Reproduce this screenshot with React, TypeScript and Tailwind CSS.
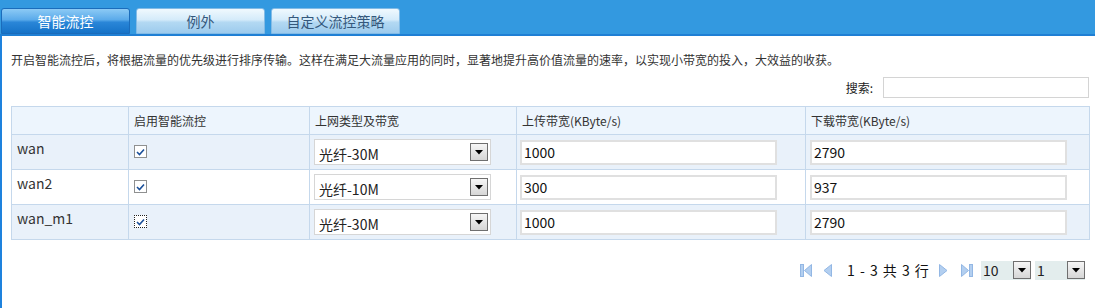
import React from "react";

const FONT = { fontFamily: '"Noto Sans CJK SC", "Noto Sans", sans-serif' };

function Tab({ label, active }: { label: string; active?: boolean }) {
  if (active) {
    return (
      <div className="w-[129px] h-[26px] rounded-t-[3px] border border-[#1b6cbb] bg-[linear-gradient(to_bottom,#8ccaf5_0%,#5aaaea_45%,#2a86d8_55%,#1673c8_100%)] flex items-center justify-center text-[14px] text-white leading-none">
        {label}
      </div>
    );
  }
  return (
    <div className="w-[129px] h-[26px] rounded-t-[3px] border border-[#82bbe6] bg-[linear-gradient(to_bottom,#f0f9fe_0%,#d4ebfa_45%,#b3d9f3_55%,#9dcbed_100%)] flex items-center justify-center text-[14px] text-[#34587c] leading-none">
      {label}
    </div>
  );
}

function Check({ focus }: { focus?: boolean }) {
  return (
    <div
      className={
        "flex w-[13px] h-[13px] items-center justify-center bg-white " +
        (focus ? "border border-dotted border-[#222]" : "border border-[#8f9090]")
      }
    >
      <svg width="9" height="8" viewBox="0 0 9 8" className="block">
        <path d="M1 4 L3.5 6.5 L8 1.5" fill="none" stroke="#1a4f9a" strokeWidth="1.6" />
      </svg>
    </div>
  );
}

function ArrowBtn({ size = 18 }: { size?: number }) {
  return (
    <span
      className="inline-flex items-center justify-center border border-[#6f6f6f] bg-[linear-gradient(to_bottom,#f6f6f6,#d6d6d6)]"
      style={{ width: size, height: size }}
    >
      <svg width="8" height="5" viewBox="0 0 8 5">
        <path d="M0 0 H8 L4 4.5 Z" fill="#000" />
      </svg>
    </span>
  );
}

function Select({ value }: { value: string }) {
  return (
    <div className="w-[177px] h-[26px] border border-[#d6d6d6] bg-white flex items-center justify-between pl-[4px] pr-[2px]">
      <span className="text-[14px] text-[#222] leading-none pt-[3px]">{value}</span>
      <ArrowBtn />
    </div>
  );
}

function TextInput({ value }: { value: string }) {
  return (
    <div className="w-[257px] h-[25px] border-2 border-[#e0e0e0] bg-white flex items-center pl-[2px] text-[14px] text-[#111] leading-none">
      {value}
    </div>
  );
}

function PageIcon({ kind }: { kind: "first" | "prev" | "next" | "last" }) {
  const fill = "#b3cff0";
  const stroke = "#93b7e4";
  if (kind === "first")
    return (
      <svg width="12" height="13" viewBox="0 0 12 13" className="block">
        <rect x="0.5" y="0.5" width="3" height="12" fill={fill} stroke={stroke} />
        <path d="M11.5 0.5 V12.5 L4.5 6.5 Z" fill={fill} stroke={stroke} />
      </svg>
    );
  if (kind === "last")
    return (
      <svg width="12" height="13" viewBox="0 0 12 13" className="block">
        <rect x="8.5" y="0.5" width="3" height="12" fill={fill} stroke={stroke} />
        <path d="M0.5 0.5 V12.5 L7.5 6.5 Z" fill={fill} stroke={stroke} />
      </svg>
    );
  if (kind === "prev")
    return (
      <svg width="9" height="13" viewBox="0 0 9 13" className="block">
        <path d="M8.5 0.5 V12.5 L1 6.5 Z" fill={fill} stroke={stroke} />
      </svg>
    );
  return (
    <svg width="9" height="13" viewBox="0 0 9 13" className="block">
      <path d="M0.5 0.5 V12.5 L8 6.5 Z" fill={fill} stroke={stroke} />
    </svg>
  );
}

function PageSelect({ value }: { value: string }) {
  return (
    <div className="w-[50px] h-[19px] bg-[#e3eded] flex items-center justify-between pl-[2px]">
      <span className="text-[14px] text-[#222] leading-none">{value}</span>
      <ArrowBtn size={18} />
    </div>
  );
}

const rows = [
  { name: "wan", sel: "光纤-30M", up: "1000", down: "2790", shade: true, focus: false },
  { name: "wan2", sel: "光纤-10M", up: "300", down: "937", shade: false, focus: false },
  { name: "wan_m1", sel: "光纤-30M", up: "1000", down: "2790", shade: true, focus: true },
];

export default function App() {
  return (
    <div className="w-[1095px] min-h-[308px] flex flex-col bg-white" style={FONT}>
      <div className="h-[36px] bg-[#3399e0] border-b-2 border-[#1f7fd4] flex items-end gap-[6px] pl-[1px]">
        <Tab label="智能流控" active />
        <Tab label="例外" />
        <Tab label="自定义流控策略" />
      </div>
      <div className="flex-1 border-l-2 border-[#1e82dd] pl-[9px] pr-[4px]">
        <div className="pt-[15px] text-[12px] leading-[18px] text-[#333]">
          开启智能流控后，将根据流量的优先级进行排序传输。这样在满足大流量应用的同时，显著地提升高价值流量的速率，以实现小带宽的投入，大效益的收获。
        </div>
        <div className="mt-[8px] flex items-center justify-end w-[1078px]">
          <span className="text-[12px] text-[#222] mr-[10px] leading-none">搜索:</span>
          <div className="w-[206px] h-[21px] border border-[#d4d4d4] bg-white" />
        </div>
        <table className="mt-[8px] w-[1078px] table-fixed border-collapse border border-[#c5d8ec]">
          <colgroup>
            <col className="w-[117px]" />
            <col className="w-[181px]" />
            <col className="w-[207px]" />
            <col className="w-[289px]" />
            <col className="w-[284px]" />
          </colgroup>
          <thead>
            <tr className="h-[28px] bg-[#edf5fd] text-[12px] text-[#333] text-left">
              <th className="font-normal border border-[#c5d8ec] pl-[5px]"></th>
              <th className="font-normal border border-[#c5d8ec] pl-[5px]">启用智能流控</th>
              <th className="font-normal border border-[#c5d8ec] pl-[5px]">上网类型及带宽</th>
              <th className="font-normal border border-[#c5d8ec] pl-[5px]">上传带宽(KByte/s)</th>
              <th className="font-normal border border-[#c5d8ec] pl-[5px]">下载带宽(KByte/s)</th>
            </tr>
          </thead>
          <tbody>
            {rows.map((r) => (
              <tr key={r.name} className={"h-[35px] " + (r.shade ? "bg-[#e9f1fa]" : "bg-white")}>
                <td className="border border-[#c5d8ec] pl-[5px] align-top pt-[3px] text-[14px] leading-[20px] text-[#333]">
                  {r.name}
                </td>
                <td className="border border-[#c5d8ec] pl-[5px] align-top pt-[10px]">
                  <Check focus={r.focus} />
                </td>
                <td className="border border-[#c5d8ec] pl-[4px] align-middle">
                  <Select value={r.sel} />
                </td>
                <td className="border border-[#c5d8ec] pl-[3px] align-middle">
                  <TextInput value={r.up} />
                </td>
                <td className="border border-[#c5d8ec] pl-[4px] align-middle">
                  <TextInput value={r.down} />
                </td>
              </tr>
            ))}
          </tbody>
        </table>
        <div className="mt-[20px] flex items-center justify-end pr-[6px] h-[20px]">
          <PageIcon kind="first" />
          <span className="w-[11px]" />
          <PageIcon kind="prev" />
          <span className="ml-[15px] mr-[12px] w-[80px] whitespace-pre text-[14px] text-[#111] leading-none [word-spacing:2px]">1 - 3 共 3 行</span>
          <PageIcon kind="next" />
          <span className="w-[13px]" />
          <PageIcon kind="last" />
          <span className="w-[8px]" />
          <PageSelect value="10" />
          <span className="w-[4px]" />
          <PageSelect value="1" />
        </div>
      </div>
    </div>
  );
}
